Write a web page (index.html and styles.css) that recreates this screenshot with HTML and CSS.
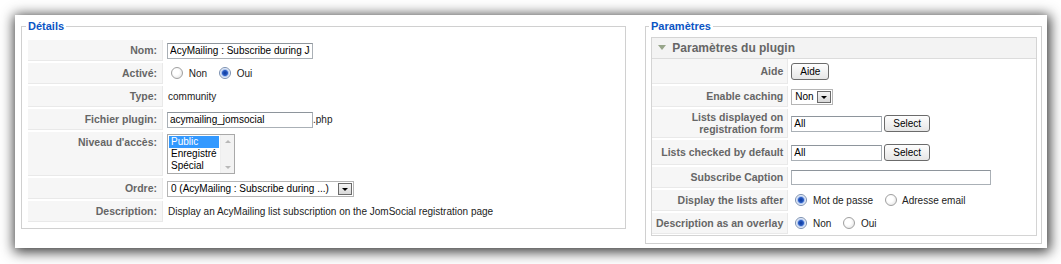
FILE: index.html
```html
<!DOCTYPE html>
<html lang="fr">
<head>
    <meta charset="UTF-8">
    <title>Plugin - AcyMailing : Subscribe during JomSocial</title>
    <link rel="stylesheet" href="styles.css">
</head>
<body>
    <div class="frame">
        <fieldset class="box details">
            <legend>Détails</legend>
            <table class="admintable">
                <tr>
                    <td class="key">Nom:</td>
                    <td><input type="text" class="text name" value="AcyMailing : Subscribe during JomSocial"></td>
                </tr>
                <tr>
                    <td class="key">Activé:</td>
                    <td class="radios">
                        <label><input type="radio" name="published"> Non</label>
                        <label><input type="radio" name="published" checked> Oui</label>
                    </td>
                </tr>
                <tr>
                    <td class="key">Type:</td>
                    <td class="plain">community</td>
                </tr>
                <tr>
                    <td class="key">Fichier plugin:</td>
                    <td><input type="text" class="text name" value="acymailing_jomsocial">.php</td>
                </tr>
                <tr>
                    <td class="key top">Niveau d'accès:</td>
                    <td>
                        <div class="listbox">
                            <div class="options">
                                <div class="opt sel">Public</div>
                                <div class="opt">Enregistré</div>
                                <div class="opt">Spécial</div>
                            </div>
                            <div class="scroll">
                                <span class="up"></span>
                                <span class="down"></span>
                            </div>
                        </div>
                    </td>
                </tr>
                <tr>
                    <td class="key">Ordre:</td>
                    <td>
                        <div class="select order">
                            <span class="val">0 (AcyMailing : Subscribe during ...)</span>
                            <span class="arrow"></span>
                        </div>
                    </td>
                </tr>
                <tr>
                    <td class="key">Description:</td>
                    <td class="plain">Display an AcyMailing list subscription on the JomSocial registration page</td>
                </tr>
            </table>
        </fieldset>

        <fieldset class="box params">
            <legend>Paramètres</legend>
            <div class="pane">
                <h3 class="pane-title">
                    <svg width="8" height="6" viewBox="0 0 8 6"><polygon points="0,0 8,0 4,5" fill="#97a58a"/></svg>
                    Paramètres du plugin
                </h3>
                <table class="paramlist">
                    <tr>
                        <td class="key">Aide</td>
                        <td><button class="btn">Aide</button></td>
                    </tr>
                    <tr>
                        <td class="key">Enable caching</td>
                        <td>
                            <div class="select caching">
                                <span class="val">Non</span>
                                <span class="arrow"></span>
                            </div>
                        </td>
                    </tr>
                    <tr>
                        <td class="key two">Lists displayed on registration form</td>
                        <td><input type="text" class="text lists" value="All"><button class="btn pick">Select</button></td>
                    </tr>
                    <tr>
                        <td class="key">Lists checked by default</td>
                        <td><input type="text" class="text lists" value="All"><button class="btn pick">Select</button></td>
                    </tr>
                    <tr>
                        <td class="key">Subscribe Caption</td>
                        <td><input type="text" class="text caption" value=""></td>
                    </tr>
                    <tr>
                        <td class="key">Display the lists after</td>
                        <td class="radios">
                            <label><input type="radio" name="after" checked> Mot de passe</label>
                            <label><input type="radio" name="after"> Adresse email</label>
                        </td>
                    </tr>
                    <tr>
                        <td class="key">Description as an overlay</td>
                        <td class="radios">
                            <label><input type="radio" name="overlay" checked> Non</label>
                            <label><input type="radio" name="overlay"> Oui</label>
                        </td>
                    </tr>
                </table>
            </div>
        </fieldset>
    </div>
</body>
</html>
```

FILE: styles.css
```css
body {
    margin: 0;
    background: #fff;
    font-family: "Liberation Sans", Arial, sans-serif;
    font-size: 10px;
    color: #222;
}
.frame {
    margin: 15px 14px 16px 15px;
    height: 233px;
    box-sizing: border-box;
    padding: 4px 5px 5px 6px;
    background: #fff;
    box-shadow: 1px 2px 12px 2px rgba(0,0,0,0.78);
    display: flex;
    align-items: flex-start;
    gap: 19px;
}
fieldset.box {
    margin: 0;
    border: 1px solid #d0d0d0;
    box-sizing: border-box;
}
fieldset.box legend {
    color: #0b55c4;
    font-weight: bold;
    font-size: 11px;
    line-height: 14px;
    padding: 0 2px;
    margin-left: -2px;
}
.details {
    width: 605px;
    padding: 5px 6px 4px 6px;
}
.params {
    width: 397px;
    padding: 4px 4px 7px 5px;
}
.params legend {
    margin-left: 0;
}

/* left table */
.admintable {
    border-collapse: separate;
    border-spacing: 0 2px;
}
.admintable td {
    padding: 2px 4px 2px 4px;
    line-height: 13px;
    vertical-align: middle;
}
.admintable td.key {
    width: 125px;
    padding: 4px 5px 3px 4px;
    background: #f6f6f6;
    border-bottom: 1px solid #e9e9e9;
    border-right: 1px solid #e9e9e9;
    text-align: right;
    font-size: 10.5px;
    font-weight: bold;
    color: #666;
    white-space: nowrap;
}
.admintable td.key.top {
    vertical-align: top;
    padding-top: 4px;
}
.admintable td.plain {
    padding-left: 5px;
}

/* form controls */
input.text {
    height: 16px;
    box-sizing: border-box;
    border: 1px solid #aab0b6;
    border-top-color: #8e959c;
    padding: 0 2px;
    margin: 0;
    font-family: "Liberation Sans", Arial, sans-serif;
    font-size: 10px;
    color: #000;
    vertical-align: middle;
}
input.name {
    width: 146px;
}
input.lists {
    width: 91px;
}
input.caption {
    width: 200px;
    height: 15px;
}
.btn {
    height: 17px;
    padding: 0 8px;
    margin: 2px 0;
    border: 1px solid #6b6b6b;
    border-radius: 3px;
    background: linear-gradient(#fefefe, #e6e6e6);
    font-family: "Liberation Sans", Arial, sans-serif;
    font-size: 10px;
    color: #000;
    vertical-align: middle;
}
.btn.pick {
    margin-left: 2px;
}
.radios label {
    margin-right: 5px;
    white-space: nowrap;
}
.radios input[type="radio"] {
    appearance: none;
    -webkit-appearance: none;
    width: 12px;
    height: 12px;
    margin: 0 3px 0 4px;
    border: 1px solid #a0a0a0;
    border-radius: 50%;
    background: radial-gradient(circle at 40% 40%, #fff 0, #fff 35%, #dcdcdc 100%);
    vertical-align: -2px;
}
.radios input[type="radio"]:checked {
    border-color: #7a8fb0;
    background: radial-gradient(circle, #0d3a9a 0, #2a5cc4 2.5px, #a9c2ee 3.5px, #fff 5px);
}
.select {
    display: inline-flex;
    align-items: center;
    height: 16px;
    box-sizing: border-box;
    border: 1px solid #b5b5b5;
    background: #fff;
    vertical-align: middle;
    color: #000;
}
.select .val {
    flex: 1;
    padding: 0 3px;
    white-space: nowrap;
}
.select .arrow {
    position: relative;
    width: 14px;
    height: 12px;
    margin-right: 1px;
    box-sizing: border-box;
    border: 1px solid #6a6a6a;
    background: linear-gradient(#f4f4f4, #d8d8d8);
}
.select .arrow::after {
    content: "";
    position: absolute;
    left: 3px;
    top: 4px;
    border-left: 3px solid transparent;
    border-right: 3px solid transparent;
    border-top: 3px solid #000;
}
.select.order {
    width: 187px;
}
.select.caching {
    width: 42px;
}
.listbox {
    display: flex;
    width: 68px;
    height: 40px;
    box-sizing: border-box;
    border: 1px solid #a9a9a9;
    background: #fff;
    color: #000;
}
.listbox .options {
    flex: 1;
    padding: 1px;
}
.listbox .opt {
    line-height: 12px;
    padding: 0 2px;
}
.listbox .opt.sel {
    background: #3399ff;
    color: #fff;
}
.listbox .scroll {
    width: 14px;
    background: #f3f3f3;
    border-left: 1px solid #eee;
    display: flex;
    flex-direction: column;
    justify-content: space-between;
    align-items: center;
    padding: 5px 0 4px;
    box-sizing: border-box;
}
.listbox .up, .listbox .down {
    width: 0;
    height: 0;
    border-left: 3px solid transparent;
    border-right: 3px solid transparent;
}
.listbox .up {
    border-bottom: 3px solid #b8b8b8;
}
.listbox .down {
    border-top: 3px solid #b8b8b8;
}

/* right pane */
.pane {
    border: 1px solid #d4d4d4;
}
.pane-title {
    margin: 0;
    height: 20px;
    line-height: 20px;
    padding-left: 6px;
    background: #f3f3f3;
    border-bottom: 1px solid #dcdcdc;
    font-size: 12px;
    color: #666;
}
.pane-title svg {
    margin-right: 3px;
    vertical-align: 1px;
}
.paramlist {
    width: 100%;
    border-collapse: separate;
    border-spacing: 0 2px;
    margin: -2px 0 -1px;
}
.paramlist td {
    padding: 2px 3px;
    line-height: 12px;
    vertical-align: middle;
}
.paramlist td.key {
    width: 126px;
    padding: 4px 4px 4px 4px;
    background: #f6f6f6;
    border-bottom: 1px solid #e9e9e9;
    border-right: 1px solid #e9e9e9;
    text-align: right;
    font-size: 10.5px;
    font-weight: bold;
    color: #666;
    white-space: nowrap;
}
.paramlist td.key.two {
    white-space: normal;
    padding-top: 2px;
    padding-bottom: 2px;
}
```
